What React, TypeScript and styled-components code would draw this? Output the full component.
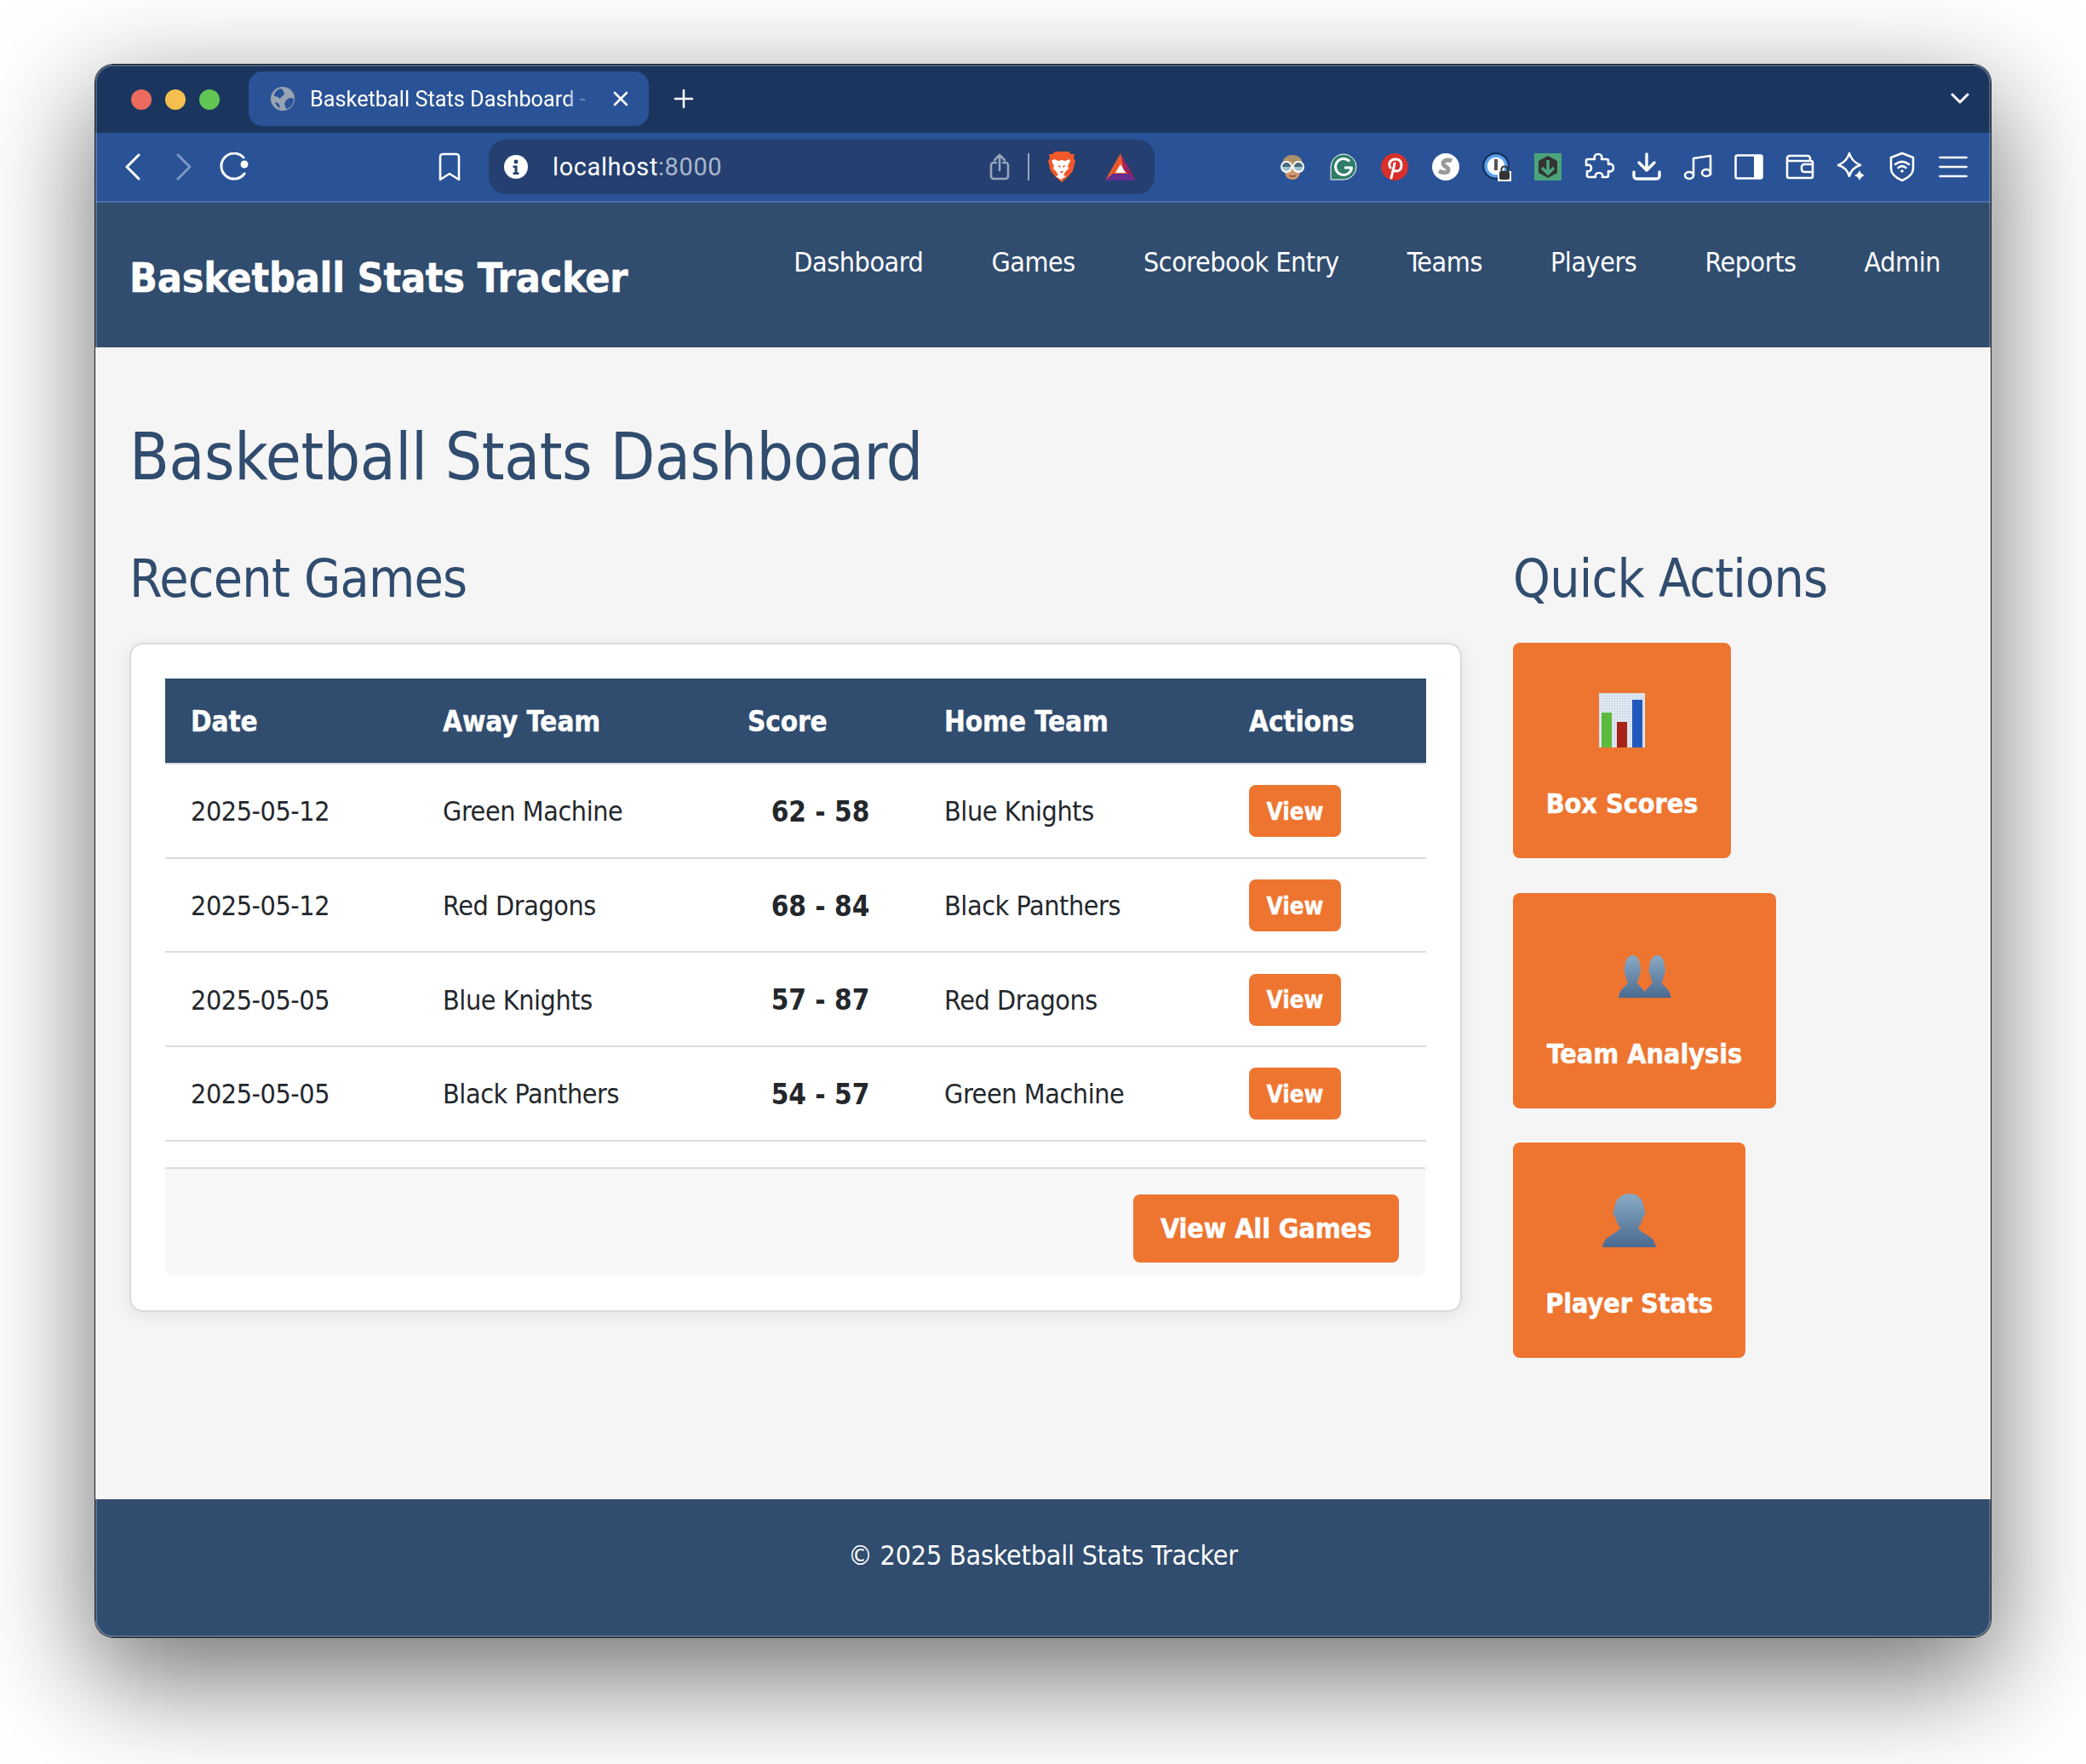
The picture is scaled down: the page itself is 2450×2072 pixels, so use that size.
import React from "react";
import styled, { createGlobalStyle } from "styled-components";

const FONT = `"DejaVu Sans Condensed", "DejaVu Sans", sans-serif`;
const UI = `Roboto, "Liberation Sans", sans-serif`;
const ORANGE = "#ee7530";
const NAVY = "#304c6e";

const Global = createGlobalStyle`
  html, body { margin: 0; padding: 0; background: #fff; }
  * { box-sizing: border-box; }
`;
const Page = styled.div`
  width: 2450px; height: 2072px; padding: 76px 112px 0; overflow: hidden; background: #fff; font-family: ${FONT};
`;
const Win = styled.div`
  position: relative; width: 2226px; height: 1847px; display: flex; flex-direction: column;
  border-radius: 21px; overflow: hidden; background: #f5f5f5;
`;
const WinShadow = styled.div`
  border-radius: 21px; width: 2226px; height: 1847px;
  box-shadow: 0 0 0 1px #1c1c1c, 0 44px 130px 6px rgba(0,0,0,.55);
`;
const Rim = styled.div`
  position: absolute; inset: 0; border-radius: 21px; border: 2px solid rgba(255,255,255,.2); pointer-events: none;
`;
const TitleBar = styled.div`
  height: 80px; background: #1a365f; display: flex; align-items: center; padding: 0 25px 0 42px; flex: none;
`;
const Dot = styled.span<{ $c: string }>`
  width: 24px; height: 24px; border-radius: 50%; background: ${p => p.$c}; margin: 0 16px 0 0; flex: none;
`;
const Dots = styled.div`display: flex; width: 138px; flex: none; margin-top: 2px;`;
const Tab = styled.div`
  width: 470px; height: 64px; border-radius: 16px; background: #2a5296; display: flex; align-items: center;
  padding: 0 20px 0 26px; flex: none; color: #fff; font: 400 25.3px ${UI};
`;
const TabTitle = styled.span`
  width: 328px; margin-left: 18px; white-space: nowrap; color: #fff;
  -webkit-mask-image: linear-gradient(90deg, #000 92%, rgba(0,0,0,.3) 96%, rgba(0,0,0,.3) 100%);
  mask-image: linear-gradient(90deg, #000 92%, rgba(0,0,0,.3) 96%, rgba(0,0,0,.3) 100%);
`;
const Icon = styled.svg`display: block; flex: none;`;
const TabClose = styled.span`margin-left: 27px; display: flex;`;
const NewTab = styled.span`margin-left: 29px; display: flex;`;
const Spacer = styled.div`flex: 1;`;
const ToolBar = styled.div`
  height: 82px; background: #2a5296; border-bottom: 2px solid #4870a8; display: flex; align-items: center; flex: none; padding: 0 0 0 14px;
`;
const ToolBtn = styled.div<{ $w?: number; $pad?: number }>`
  width: ${p => p.$w ?? 60}px; height: 60px; padding-left: ${p => p.$pad ?? 0}px; display: flex; align-items: center; justify-content: center; flex: none;
`;
const ToolGap = styled.div<{ $w: number }>`width: ${p => p.$w}px; flex: none;`;
const UrlBar = styled.div`
  width: 782px; height: 64px; border-radius: 20px; background: #243f70; display: flex; align-items: center; padding: 0 22px 0 18px; flex: none;
  margin-left: 16px; font: 400 29px ${UI}; color: #fff;
`;
const UrlText = styled.span`margin-left: 29px; letter-spacing: .6px;`;
const UrlPort = styled.span`color: #a9b6cc;`;
const UrlDiv = styled.span`width: 2px; height: 32px; background: #98a5ba; margin: 0 0 0 21px;`;
const UrlGap = styled.span`width: 22px; flex: none;`;
const UrlGap2 = styled.span`width: 35px; flex: none;`;
const Header = styled.header`
  height: 170px; background: ${NAVY}; display: flex; justify-content: space-between; padding: 0 59px 0 40px; color: #fff; flex: none;
`;
const Brand = styled.div`
  font-weight: 700; font-size: 48px; line-height: 176px; white-space: nowrap; letter-spacing: -.2px; -webkit-text-stroke: .5px #fff;
`;
const Nav = styled.nav`display: flex; gap: 80px; padding-top: 46px;`;
const NavLink = styled.a`font-size: 32px; letter-spacing: -.45px; line-height: 48px; color: #fff; white-space: nowrap;`;
const Main = styled.main`flex: 1; padding: 0 40px; color: ${NAVY};`;
const H1 = styled.h1`margin: 75px 0 0; font-size: 76px; letter-spacing: -.4px; font-weight: 400; line-height: 108px; white-space: nowrap;`;
const Cols = styled.div`display: flex; gap: 60px; margin-top: 42px;`;
const Left = styled.section`width: 1565px; flex: none;`;
const Right = styled.aside`flex: 1;`;
const H2 = styled.h2`margin: 0 0 30px; padding-top: 2px; font-size: 62px; letter-spacing: -.75px; font-weight: 400; line-height: 90px; white-space: nowrap;`;
const Card = styled.div`
  height: 786px; background: #fff; border: 2px solid #dadada; border-radius: 16px; padding: 40px 41px 40px 40px;
  box-shadow: 0 4px 20px rgba(0,0,0,.08);
`;
const Table = styled.table`width: 1481px; border-collapse: collapse; table-layout: fixed; color: #23272c;`;
const Th = styled.th<{ $w: number }>`
  width: ${p => p.$w}px; height: 100px; background: ${NAVY}; color: #fff; font-size: 33px; font-weight: 700; text-align: left; padding: 2px 0 0 30px;
  letter-spacing: -.1px; -webkit-text-stroke: .4px #fff;
`;
const Tr = styled.tr`border-bottom: 2px solid #dcdcdc;`;
const HeadRow = styled.tr`border-bottom: 2px solid #dcdcdc;`;
const Td = styled.td`height: 110.7px; font-size: 32px; letter-spacing: -.42px; padding: 2px 0 0 30px; white-space: nowrap;`;
const ScoreTd = styled(Td)`font-size: 33px; letter-spacing: 0; font-weight: 700; text-align: center; padding: 2px 0 0;`;
const ViewBtn = styled.a`
  display: flex; width: 108px; height: 61px; margin-top: -1px; align-items: center; justify-content: center; border-radius: 8px; background: ${ORANGE};
  color: #fff; font-weight: 700; font-size: 27.5px; letter-spacing: 0; -webkit-text-stroke: .4px #fff;
`;
const CardFoot = styled.div`
  margin-top: 30px; height: 128px; background: #f8f8f8; border-top: 2px solid #dcdcdc; border-radius: 0 0 10px 10px;
  display: flex; justify-content: flex-end; padding: 30px 31px 0 0;
`;
const AllBtn = styled.a`
  display: flex; width: 312px; height: 80px; align-items: center; justify-content: center; border-radius: 8px; background: ${ORANGE};
  color: #fff; font-weight: 700; font-size: 32px; letter-spacing: -.1px; white-space: nowrap; -webkit-text-stroke: .5px #fff;
`;
const Actions = styled.div`display: flex; flex-direction: column; align-items: flex-start; gap: 40.5px;`;
const Action = styled.a<{ $w: number }>`
  width: ${p => p.$w}px; height: 253px; padding-top: 59px; border-radius: 8px; background: ${ORANGE}; color: #fff; font-weight: 700; font-size: 32px;
  display: flex; flex-direction: column; align-items: center; white-space: nowrap; -webkit-text-stroke: .5px #fff;
`;
const ActionIcon = styled.div`height: 64px; display: flex; align-items: flex-end; justify-content: center; margin-bottom: 47px;`;
const Footer = styled.footer`
  height: 162px; background: ${NAVY}; color: #fff; font-size: 32px; letter-spacing: -.2px; text-align: center; padding-top: 44px; line-height: 44px; flex: none;
`;

const s = { fill: "none", stroke: "#fff", strokeWidth: 2.6, strokeLinecap: "round" as const, strokeLinejoin: "round" as const };

const Globe = () => (
  <Icon width="28" height="28" viewBox="0 0 28 28">
    <circle cx="14" cy="14" r="14" fill="#98a3b3" />
    <path d="M12 2C7 3 4 7 4 11c3 0 5 1 7 3 1-3 4-3 5-6-1-3-2-5-4-6zM27 14c-3-2-6-1-8 1-1 2-3 3-3 5 1 3 1 5 3 6 5-2 8-7 8-12zM5 18c2 0 4 1 5 3l1 4c-3-1-5-4-6-7z" fill="#2a5296" />
  </Icon>
);
const CloseX = () => (
  <Icon width="20" height="20" viewBox="0 0 20 20"><path d="M3 3l14 14M17 3L3 17" {...s} /></Icon>
);
const Plus = () => (
  <Icon width="24" height="24" viewBox="0 0 24 24"><path d="M12 2v20M2 12h20" {...s} /></Icon>
);
const Back = () => (
  <Icon width="20" height="32" viewBox="0 0 20 32"><path d="M17 2L3 16l14 14" {...s} strokeWidth={3} /></Icon>
);
const Forward = () => (
  <Icon width="20" height="32" viewBox="0 0 20 32"><path d="M3 2l14 14L3 30" {...s} strokeWidth={3} stroke="#7f98c3" /></Icon>
);
const Reload = () => (
  <Icon width="36" height="34" viewBox="0 0 36 34">
    <path d="M29 25A15 15 0 1 1 28 6" {...s} strokeWidth={3} />
    <circle cx="29" cy="14" r="4.5" fill="#fff" />
  </Icon>
);
const Bookmark = () => (
  <Icon width="26" height="34" viewBox="0 0 26 34"><path d="M2 5a3 3 0 0 1 3-3h16a3 3 0 0 1 3 3v27l-11-7-11 7z" {...s} /></Icon>
);
const Info = () => (
  <Icon width="28" height="28" viewBox="0 0 28 28">
    <circle cx="14" cy="14" r="14" fill="#fff" />
    <circle cx="14" cy="8" r="2.4" fill="#243f70" />
    <path d="M10.5 12.5h5v8h2v2.5h-7v-2.5h2v-5.5h-2z" fill="#243f70" />
  </Icon>
);
const Share = () => (
  <Icon width="24" height="32" viewBox="0 0 24 32">
    <path d="M8 11H5a3 3 0 0 0-3 3v13a3 3 0 0 0 3 3h14a3 3 0 0 0 3-3V14a3 3 0 0 0-3-3h-3M12 20V2M6 8l6-6 6 6" {...s} stroke="#98a5ba" />
  </Icon>
);
const Brave = () => (
  <Icon width="32" height="36" viewBox="0 0 32 36">
    <path d="M8 0h16l3 3 4 0-1 5 2 3-3 12-6 7-7 6-7-6-6-7L0 11l2-3-1-5 4 0z" fill="#f1592a" />
    <path d="M7 9l5 2 4-1 4 1 5-2 1 2-3 6 1 3-4 4-2 4 3 1-6 4-6-4 3-1-2-4-4-4 1-3-3-6z" fill="#fff" />
    <path d="M11 16l4 1-1 2zM21 16l-4 1 1 2zM14 23h4l-2 3z" fill="#f1592a" />
  </Icon>
);
const Bat = () => (
  <Icon width="36" height="32" viewBox="0 0 36 32">
    <path d="M18 0L0 32l9-8z" fill="#f15a2b" />
    <path d="M18 0l18 32-9-8z" fill="#9e1f63" />
    <path d="M0 32h36l-9-8H9z" fill="#662d91" />
    <path d="M18 0L9 24h18z" fill="#f0582a" />
    <path d="M18 0l9 24-5-4z" fill="#9e1f63" />
    <path d="M18 13l6 10H12z" fill="#fff" />
  </Icon>
);
const Face = () => (
  <Icon width="32" height="32" viewBox="0 0 32 32">
    <path d="M4 14C4 6 9 2 16 2s12 4 12 12v8H4z" fill="#ac9268" />
    <path d="M7 14c3 0 6-2 8-5 2 3 6 5 10 5v8c0 5-4 9-9 9s-9-4-9-9z" fill="#cf9a6f" />
    <circle cx="9" cy="16" r="6" fill="#9dc5cf" stroke="#fff" strokeWidth="2" />
    <circle cx="23" cy="16" r="6" fill="#9dc5cf" stroke="#fff" strokeWidth="2" />
    <path d="M4 16a5 5 0 0 1 10 0zM18 16a5 5 0 0 1 10 0z" fill="#486b76" />
    <path d="M12 26c3 2 5 2 8 0" stroke="#985c45" strokeWidth="2" fill="none" />
  </Icon>
);
const Gram = () => (
  <Icon width="32" height="32" viewBox="0 0 32 32">
    <path d="M1 31V16a15 15 0 1 1 15 15z" fill="#2f7d69" stroke="#fff" strokeWidth="1" />
    <path d="M23 9.5A9.5 9.5 0 1 0 25.500 17H17" {...s} strokeWidth={3} strokeLinecap="butt" />
  </Icon>
);
const Pin = () => (
  <Icon width="32" height="32" viewBox="0 0 32 32">
    <circle cx="16" cy="16" r="16" fill="#d8302b" />
    <path d="M11 17c-3-5 0-10 6-10 5 0 7 3 7 7 0 5-3 7-6 7-2 0-3-1-3-2M16 12l-4 17" {...s} strokeWidth={3} />
  </Icon>
);
const Sk = () => (
  <Icon width="32" height="32" viewBox="0 0 32 32">
    <circle cx="16" cy="16" r="16" fill="#fff" />
    <path d="M23 9c-4-2-10-1-10 3 0 4 7 4 6 8-1 4-7 3-11 1" fill="none" stroke="#999" strokeWidth="5" />
  </Icon>
);
const OneP = () => (
  <Icon width="34" height="34" viewBox="0 0 34 34">
    <circle cx="16" cy="16" r="16" fill="#16305c" />
    <circle cx="16" cy="16" r="12" fill="#fff" stroke="#5aa0ee" strokeWidth="3.500" />
    <rect x="14" y="8" width="4" height="13" fill="#555" />
    <path d="M18 22h16v12H18z" fill="#fff" />
    <rect x="20" y="22" width="12" height="10" rx="2" fill="#333" />
    <path d="M22.500 22v-2a3.500 3.500 0 0 1 7 0v2" stroke="#333" strokeWidth="2" fill="none" />
  </Icon>
);
const Dl = () => (
  <Icon width="32" height="32" viewBox="0 0 32 32">
    <rect width="32" height="32" fill="#4ba37c" />
    <path d="M16 3l11 6v14l-11 6-11-6V9z" fill="#333" />
    <path d="M16 8v16M9 17l7 7 7-7" fill="none" stroke="#4ba37c" strokeWidth="3.500" />
  </Icon>
);
const Puzzle = () => (
  <Icon width="36" height="34" viewBox="0 0 36 34">
    <path d="M12 8c-1-3 0-6 4-6s5 3 4 6h6a2 2 0 0 1 2 2v4c3-1 6 0 6 4s-3 5-6 4v5a2 2 0 0 1-2 2h-5c1-3-1-5-4-5s-5 2-4 5H5a2 2 0 0 1-2-2v-5c3 1 5-1 5-4s-3-4-6-3v-5a2 2 0 0 1 2-2z" {...s} />
  </Icon>
);
const Down = () => (
  <Icon width="34" height="34" viewBox="0 0 34 34">
    <path d="M17 2v19M8 12l9 9 9-9" {...s} strokeWidth={3.4} />
    <path d="M2 23v5a3 3 0 0 0 3 3h24a3 3 0 0 0 3-3v-5" {...s} strokeWidth={3.4} />
  </Icon>
);
const Music = () => (
  <Icon width="34" height="34" viewBox="0 0 34 34">
    <path d="M12 27V7l20-3v22" {...s} />
    <ellipse cx="7" cy="27" rx="5" ry="4" {...s} />
    <ellipse cx="27" cy="24" rx="5" ry="4" {...s} />
  </Icon>
);
const Side = () => (
  <Icon width="34" height="30" viewBox="0 0 34 30">
    <rect x="1.500" y="1.500" width="31" height="27" rx="2" {...s} />
    <path d="M23 2h8a2 2 0 0 1 2 2v22a2 2 0 0 1-2 2h-8z" fill="#fff" />
  </Icon>
);
const Wallet = () => (
  <Icon width="34" height="30" viewBox="0 0 34 30">
    <path d="M2 5a3 3 0 0 1 3-3h21a3 3 0 0 1 3 3v3H5a3 3 0 0 1-3-3v21a2 2 0 0 0 2 2h26a2 2 0 0 0 2-2V10a2 2 0 0 0-2-2" {...s} />
    <path d="M32 12H22a3 3 0 0 0-3 3v3a3 3 0 0 0 3 3h10" {...s} />
  </Icon>
);
const Star = () => (
  <Icon width="34" height="36" viewBox="0 0 34 36">
    <path d="M15 2c2 7 6 11 13 14-7 2-11 6-13 13-2-7-6-11-13-13 7-3 11-7 13-14z" {...s} />
    <path d="M27 22c1 3 3 5 6 6-3 1-5 3-6 6-1-3-3-5-6-6 3-1 5-3 6-6z" fill="#fff" />
  </Icon>
);
const Shield = () => (
  <Icon width="30" height="36" viewBox="0 0 30 36">
    <path d="M15 2l13 5v13c0 6-6 11-13 14C8 31 2 26 2 20V7z" {...s} />
    <path d="M7 15c5-4 11-4 16 0M10.500 19c3-2.500 6-2.500 9 0" {...s} />
    <circle cx="15" cy="23" r="1.800" fill="#fff" />
  </Icon>
);
const Menu = () => (
  <Icon width="34" height="26" viewBox="0 0 34 26"><path d="M1.500 2h31M1.500 13h31M1.500 24h31" {...s} strokeWidth={2.600} /></Icon>
);
const Chevron = () => (
  <Icon width="22" height="14" viewBox="0 0 22 14"><path d="M2 2l9 9 9-9" {...s} strokeWidth={3} /></Icon>
);
const Chart = () => (
  <Icon width="54" height="64" viewBox="0 0 54 64">
    <defs>
      <pattern id="gr" width="3" height="3" patternUnits="userSpaceOnUse">
        <rect width="3" height="3" fill="#e4ecf3" />
        <path d="M0 0h3M0 0v3" stroke="#b4c9dc" strokeWidth=".8" />
      </pattern>
    </defs>
    <rect width="54" height="64" fill="url(#gr)" />
    <rect x="3" y="23" width="12" height="41" fill="#5cba3c" />
    <rect x="21" y="34" width="12" height="30" fill="#a92418" />
    <rect x="39" y="8" width="12" height="56" fill="#2358bf" />
  </Icon>
);
const Bust = ({ x = 0, id }: { x?: number; id: string }) => (
  <g transform={`translate(${x} 0)`}>
    <path d="M32 0c11 0 17 7 17 16 2 1 2 5-1 7-1 5-4 8-6 11 3 4 10 6 14 9 4 2 6 6 7 10H0c1-4 3-8 7-10 4-3 11-5 14-9-2-3-5-6-6-11-3-2-3-6-1-7C14 7 21 0 32 0z" fill={`url(#${id})`} />
  </g>
);
const BustGrad = ({ id }: { id: string }) => (
  <defs>
    <linearGradient id={id} x1="0" y1="0" x2="0" y2="1">
      <stop offset="0" stopColor="#8aaac6" />
      <stop offset="1" stopColor="#4a6a90" />
    </linearGradient>
  </defs>
);
const Person = () => (
  <Icon width="64" height="63" viewBox="0 0 64 53" preserveAspectRatio="none"><BustGrad id="g1" /><Bust id="g1" /></Icon>
);
const People = () => (
  <Icon width="62" height="50" viewBox="0 0 120 53" preserveAspectRatio="none"><BustGrad id="g2" /><Bust id="g2" /><Bust id="g2" x={56} /></Icon>
);

const games = [
  ["2025-05-12", "Green Machine", "62 - 58", "Blue Knights"],
  ["2025-05-12", "Red Dragons", "68 - 84", "Black Panthers"],
  ["2025-05-05", "Blue Knights", "57 - 87", "Red Dragons"],
  ["2025-05-05", "Black Panthers", "54 - 57", "Green Machine"],
];
const cols: [string, number][] = [["Date", 296], ["Away Team", 358], ["Score", 231], ["Home Team", 358], ["Actions", 238]];
const nav = ["Dashboard", "Games", "Scorebook Entry", "Teams", "Players", "Reports", "Admin"];

export default function App() {
  return (
    <Page>
      <Global />
      <WinShadow>
        <Win>
          <TitleBar>
            <Dots>
              <Dot $c="#ec6a5e" /><Dot $c="#f4bf4f" /><Dot $c="#61c554" />
            </Dots>
            <Tab>
              <Globe />
              <TabTitle>Basketball Stats Dashboard -</TabTitle>
              <TabClose><CloseX /></TabClose>
            </Tab>
            <NewTab><Plus /></NewTab>
            <Spacer />
            <Chevron />
          </TitleBar>
          <ToolBar>
            <ToolBtn><Back /></ToolBtn>
            <ToolBtn><Forward /></ToolBtn>
            <ToolBtn><Reload /></ToolBtn>
            <ToolGap $w={192} />
            <ToolBtn><Bookmark /></ToolBtn>
            <UrlBar>
              <Info />
              <UrlText>localhost<UrlPort>:8000</UrlPort></UrlText>
              <Spacer />
              <Share />
              <UrlDiv />
              <UrlGap />
              <Brave />
              <UrlGap2 />
              <Bat />
            </UrlBar>
            <ToolGap $w={132} />
            <ToolBtn><Face /></ToolBtn>
            <ToolBtn><Gram /></ToolBtn>
            <ToolBtn><Pin /></ToolBtn>
            <ToolBtn><Sk /></ToolBtn>
            <ToolBtn><OneP /></ToolBtn>
            <ToolBtn><Dl /></ToolBtn>
            <ToolBtn $w={56} $pad={5}><Puzzle /></ToolBtn>
            <ToolBtn><Down /></ToolBtn>
            <ToolBtn><Music /></ToolBtn>
            <ToolBtn><Side /></ToolBtn>
            <ToolBtn><Wallet /></ToolBtn>
            <ToolBtn><Star /></ToolBtn>
            <ToolBtn><Shield /></ToolBtn>
            <ToolBtn><Menu /></ToolBtn>
          </ToolBar>
          <Header>
            <Brand>Basketball Stats Tracker</Brand>
            <Nav>{nav.map(n => <NavLink key={n}>{n}</NavLink>)}</Nav>
          </Header>
          <Main>
            <H1>Basketball Stats Dashboard</H1>
            <Cols>
              <Left>
                <H2>Recent Games</H2>
                <Card>
                  <Table>
                    <thead>
                      <HeadRow>{cols.map(([c, w]) => <Th key={c} $w={w}>{c}</Th>)}</HeadRow>
                    </thead>
                    <tbody>
                      {games.map((g, i) => (
                        <Tr key={i}>
                          <Td>{g[0]}</Td>
                          <Td>{g[1]}</Td>
                          <ScoreTd>{g[2]}</ScoreTd>
                          <Td>{g[3]}</Td>
                          <Td><ViewBtn>View</ViewBtn></Td>
                        </Tr>
                      ))}
                    </tbody>
                  </Table>
                  <CardFoot><AllBtn>View All Games</AllBtn></CardFoot>
                </Card>
              </Left>
              <Right>
                <H2>Quick Actions</H2>
                <Actions>
                  <Action $w={256}><ActionIcon><Chart /></ActionIcon>Box Scores</Action>
                  <Action $w={309}><ActionIcon><People /></ActionIcon>Team Analysis</Action>
                  <Action $w={273}><ActionIcon><Person /></ActionIcon>Player Stats</Action>
                </Actions>
              </Right>
            </Cols>
          </Main>
          <Footer>© 2025 Basketball Stats Tracker</Footer>
          <Rim />
        </Win>
      </WinShadow>
    </Page>
  );
}
